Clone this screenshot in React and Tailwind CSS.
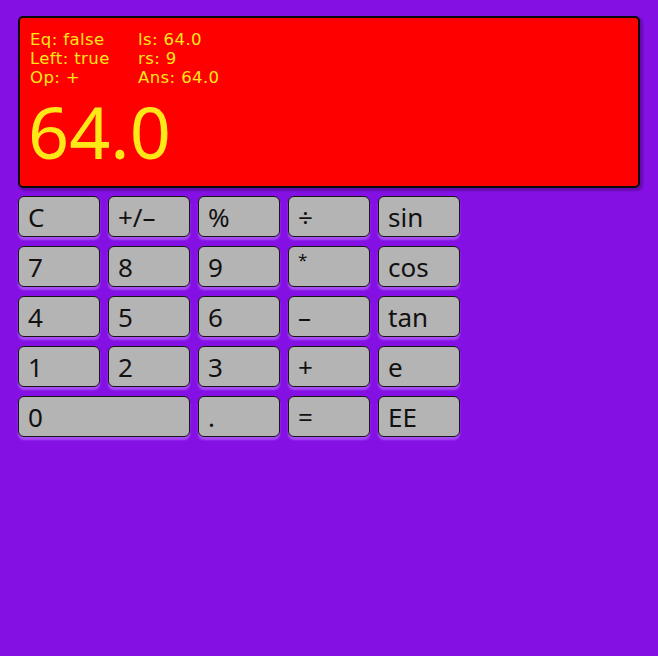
import React from "react";

const font = { fontFamily: '"Noto Sans", "DejaVu Sans", sans-serif' };

function Btn({ label, wide }) {
  return (
    <div
      className={`h-[41px] ${wide ? "col-span-2" : ""} flex items-center pl-[9px] rounded-[6px] border-[1.5px] border-[#151515] bg-[#b4b4b4] text-[26px] leading-none text-[#111] shadow-[0_3px_2px_0px_rgba(190,120,255,0.6)]`}
    >
      {label === "*" ? (
        <span className="relative -top-[7px] text-[17px]">*</span>
      ) : (
        label
      )}
    </div>
  );
}

export default function App() {
  const rows = [
    ["C", "+/–", "%", "÷", "sin"],
    ["7", "8", "9", "*", "cos"],
    ["4", "5", "6", "–", "tan"],
    ["1", "2", "3", "+", "e"],
  ];
  return (
    <div className="w-[658px] h-[656px] bg-[#8410e4] pt-[16px] pl-[18px]" style={font}>
      <div className="w-[622px] h-[172px] bg-[#ff0000] border-2 border-[#0a0a0a] rounded-[5px] pl-[10px] pt-[12px] text-[#ffe818] shadow-[2px_2px_2px_1px_rgba(80,10,140,0.6)]">
        <div
          className="grid grid-cols-[108px_1fr] text-[16.5px] leading-[19px] tracking-[0.4px]"
          style={{ fontFamily: '"DejaVu Sans", sans-serif' }}
        >
          <div>Eq: false</div>
          <div>ls: 64.0</div>
          <div>Left: true</div>
          <div>rs: 9</div>
          <div>Op: +</div>
          <div>Ans: 64.0</div>
        </div>
        <div className="text-[72px] leading-[72px] mt-[8px] -ml-[2px]">64.0</div>
      </div>
      <div className="mt-[8px] grid grid-cols-[repeat(5,82px)] gap-x-[8px] gap-y-[9px]">
        {rows.flat().map((l, i) => (
          <Btn key={i} label={l} />
        ))}
        <Btn label="0" wide />
        <Btn label="." />
        <Btn label="=" />
        <Btn label="EE" />
      </div>
    </div>
  );
}
